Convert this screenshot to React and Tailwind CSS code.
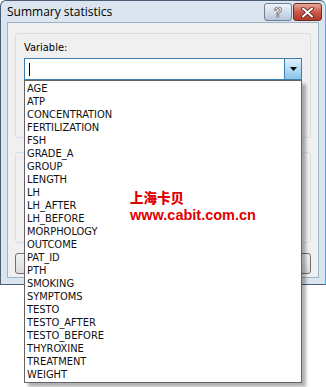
import React from "react";

const variables = [
  "AGE",
  "ATP",
  "CONCENTRATION",
  "FERTILIZATION",
  "FSH",
  "GRADE_A",
  "GROUP",
  "LENGTH",
  "LH",
  "LH_AFTER",
  "LH_BEFORE",
  "MORPHOLOGY",
  "OUTCOME",
  "PAT_ID",
  "PTH",
  "SMOKING",
  "SYMPTOMS",
  "TESTO",
  "TESTO_AFTER",
  "TESTO_BEFORE",
  "THYROXINE",
  "TREATMENT",
  "WEIGHT",
];

const uiFont = { fontFamily: '"DejaVu Sans Condensed", "DejaVu Sans", sans-serif' };

const TitleButton = ({ kind }) => {
  if (kind === "help") {
    return (
      <div className="flex h-[18px] w-[28px] items-center justify-center rounded-[3px] border border-[#6d7f95] bg-gradient-to-b from-[#eef3f9] via-[#d2deeb] to-[#b6c7da]">
        <span
          className="text-[14px] font-bold leading-none text-white"
          style={{ fontFamily: '"Liberation Sans", sans-serif', WebkitTextStroke: "0.6px #3b4a5c" }}
        >
          ?
        </span>
      </div>
    );
  }
  return (
    <div className="flex h-[18px] w-[29px] items-center justify-center rounded-[3px] border border-[#6b2b25] bg-gradient-to-b from-[#e8a89b] via-[#c9594a] to-[#b2392a]">
      <svg width="13" height="11" viewBox="0 0 13 11">
        <path d="M2 1.5 L11 9.5 M11 1.5 L2 9.5" stroke="#5a1c16" strokeWidth="3.6" strokeLinecap="round" />
        <path d="M2 1.5 L11 9.5 M11 1.5 L2 9.5" stroke="#ffffff" strokeWidth="2" strokeLinecap="round" />
      </svg>
    </div>
  );
};

export default function App() {
  return (
    <div className="relative h-[387px] w-[326px] overflow-hidden bg-white">
      {/* window */}
      <div className="flex h-[285px] w-[326px] flex-col rounded-t-[6px] border border-[#4a5f75] border-r-[#3fb4e0] bg-[#dbe5ef]">
        <div className="flex h-[21px] shrink-0 items-center justify-between pl-[6px] pr-[3px]">
          <span
            className="text-[12px] text-black"
            style={{ fontFamily: '"Open Sans", "Noto Sans", sans-serif' }}
          >
            Summary statistics
          </span>
          <div className="flex gap-[1px] pt-[1px]">
            <TitleButton kind="help" />
            <TitleButton kind="close" />
          </div>
        </div>
        <div className="mx-[6px] mb-[6px] flex flex-1 flex-col border border-[#9fb2c8] bg-[#f0f0f0] px-[7px] pt-[10px]">
          <div className="h-[105px] rounded-[3px] border border-[#d5dfe5] px-[8px] pt-[7px]" style={uiFont}>
            <div className="text-[11px] leading-[14px] text-black">Variable:</div>
            <div className="mt-[3px] flex h-[22px] border border-[#3c7fb1] bg-white">
              <div className="flex flex-1 items-center pl-[4px]">
                <div className="h-[13px] w-[1px] bg-black" />
              </div>
              <div className="flex w-[17px] items-center justify-center border-l border-[#3c7fb1] bg-gradient-to-b from-[#e3f2fc] via-[#b3dbf4] to-[#8cc5ea]">
                <svg width="7" height="4" viewBox="0 0 7 4">
                  <path d="M0 0 H7 L3.5 4 Z" fill="#000" />
                </svg>
              </div>
            </div>
          </div>
          <div className="mt-[14px] h-[91px] rounded-[3px] border border-[#d5dfe5]" />
          <div className="mt-[10px] flex justify-between">
            <div className="h-[21px] w-[75px] rounded-[3px] border border-[#707070] bg-gradient-to-b from-[#f2f2f2] to-[#dddddd]" />
            <div className="h-[21px] w-[75px] rounded-[3px] border border-[#707070] bg-gradient-to-b from-[#f2f2f2] to-[#dddddd]" />
          </div>
        </div>
      </div>

      {/* open dropdown list */}
      <ul
        className="absolute left-[24px] top-[80px] flex w-[278px] flex-col items-start border border-[#646464] bg-white py-[1px] shadow-[4px_4px_3px_rgba(0,0,0,0.3)]"
        style={uiFont}
      >
        {variables.map((v) => (
          <li key={v} className="h-[13px] pl-[2px] text-[11px] leading-[13px] text-[#101010]">
            {v}
          </li>
        ))}
      </ul>

      {/* watermark */}
      <div
        className="absolute left-[130px] top-[191px] flex flex-col items-start gap-[5px] font-bold text-[#e00000]"
        style={{ fontFamily: '"Liberation Sans", "Noto Sans CJK SC", sans-serif' }}
      >
        <span className="text-[13.5px] font-black leading-[13px]" style={{ fontFamily: '"Noto Sans CJK SC", sans-serif' }}>
          上海卡贝
        </span>
        <span className="text-[14.5px] leading-[13px]">www.cabit.com.cn</span>
      </div>
    </div>
  );
}
